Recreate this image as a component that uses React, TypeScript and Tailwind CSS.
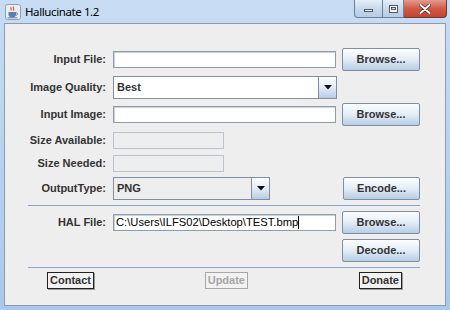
import React from 'react';

const btn =
  'flex items-center justify-center h-[23px] border border-[#7f8fa0] rounded-[2px] bg-gradient-to-b from-[#fdfeff] via-[#e3ecf6] to-[#b7cde5] text-[11px] font-bold text-[#333333]';

const plainBtn = 'h-[17px] px-[2px] flex items-center bg-[#f2f2f2] text-[11px] font-bold';

function Label({ text }: { text: string }) {
  return (
    <div className="w-[101px] text-right text-[11px] font-bold text-[#333333] leading-none">
      {text}
    </div>
  );
}

function Field({ width, disabled, children }: { width: string; disabled?: boolean; children?: React.ReactNode }) {
  return (
    <div
      className={`ml-[7px] h-[17px] ${width} flex items-center px-[2px] text-[11.2px] text-black border ${
        disabled ? 'bg-[#eeeeee] border-[#b9c4d0]' : 'bg-white border-[#8e9cab] shadow-[inset_1px_1px_0_#c8d2dc]'
      }`}
    >
      {children}
    </div>
  );
}

function Arrow() {
  return (
    <svg width="8" height="5" viewBox="0 0 8 5">
      <path d="M0 0 L8 0 L4 4.5 Z" fill="#111" />
    </svg>
  );
}

function Combo({ value, width, white }: { value: string; width: string; white?: boolean }) {
  return (
    <div className={`ml-[7px] h-[23px] ${width} flex border border-[#7f8fa0]`}>
      <div
        className={`flex-1 flex items-center pl-[3px] text-[11px] font-bold text-[#333333] border-r border-[#7f8fa0] ${
          white ? 'bg-white' : 'bg-[#eeeeee]'
        }`}
      >
        {value}
      </div>
      <div className="w-[17px] flex items-center justify-center bg-gradient-to-b from-[#fdfeff] via-[#e3ecf6] to-[#b7cde5]">
        <Arrow />
      </div>
    </div>
  );
}

function TitleBar() {
  return (
    <div className="h-[23px] flex items-start relative">
      <div className="flex items-center h-[23px] pl-[5px]">
        <svg width="16" height="16" viewBox="0 0 16 16">
          <rect x="0.5" y="0.5" width="15" height="15" rx="2" fill="#e9eef4" stroke="#8f9fb3" />
          <path d="M6 3 C5 4.5 7 5 6 6.5 M8.5 2.5 C7.5 4 9.5 5 8.5 6.8" stroke="#e0651c" strokeWidth="1.2" fill="none" />
          <path d="M3.5 8 H11 V10.5 C11 12.5 9.5 13.5 7.3 13.5 C5 13.5 3.5 12.5 3.5 10.5 Z" fill="#5b7fae" />
          <path d="M11 8.7 C13 8.7 13 11 11 11.2" stroke="#5b7fae" strokeWidth="1" fill="none" />
          <rect x="2.5" y="13.3" width="10" height="1" fill="#5b7fae" />
        </svg>
        <span className="ml-[4px] text-[11.5px] text-black font-['Noto_Sans',sans-serif] tracking-[-0.4px]">
          Hallucinate 1.2
        </span>
      </div>
      <div className="absolute right-[3px] top-0 flex h-[18px]">
        <div className="w-[29px] h-[18px] flex items-end justify-center pb-[5px] border border-t-0 border-[#6d7f96] rounded-bl-[4px] bg-gradient-to-b from-[#e6eef8] via-[#c8d9ee] to-[#b4cbe6]">
          <div className="w-[9px] h-[3px] bg-white border border-[#4c5868]" />
        </div>
        <div className="w-[21px] h-[18px] flex items-center justify-center border-b border-r border-[#6d7f96] bg-gradient-to-b from-[#e6eef8] via-[#c8d9ee] to-[#b4cbe6]">
          <div className="w-[9px] h-[8px] border border-[#4c5868] bg-white flex items-center justify-center">
            <div className="w-[5px] h-[3px] border border-[#4c5868] bg-[#c8d9ee]" />
          </div>
        </div>
        <div className="w-[43px] h-[18px] flex items-center justify-center border border-t-0 border-l-0 border-[#6b3a35] rounded-br-[4px] bg-gradient-to-b from-[#e49a8c] via-[#cf5a48] to-[#c4432f]">
          <svg width="12" height="10" viewBox="0 0 12 10">
            <path d="M1.5 1 L10.5 9 M10.5 1 L1.5 9" stroke="#4a2420" strokeWidth="3.4" strokeLinecap="round" />
            <path d="M1.5 1 L10.5 9 M10.5 1 L1.5 9" stroke="#ffffff" strokeWidth="2" strokeLinecap="round" />
          </svg>
        </div>
      </div>
    </div>
  );
}

export default function App() {
  return (
    <div className="w-[450px] h-[310px] overflow-hidden bg-gradient-to-b from-[#c8ddf4] via-[#b8d2ef] to-[#a9c8eb] font-['Liberation_Sans',Arial,sans-serif]">
      <TitleBar />
      <div className="mx-[4px] h-[283px] bg-[#eeeeee] border border-[#8c9cb0] pt-[24px]">
        {/* Input File */}
        <div className="h-[23px] flex items-center">
          <Label text="Input File:" />
          <Field width="w-[223px]" />
          <div className={`${btn} ml-[6px] w-[78px]`}>Browse...</div>
        </div>

        {/* Image Quality */}
        <div className="mt-[5px] h-[23px] flex items-center">
          <Label text="Image Quality:" />
          <Combo value="Best" width="w-[224px]" white />
        </div>

        {/* Input Image */}
        <div className="mt-[4px] h-[23px] flex items-center">
          <Label text="Input Image:" />
          <Field width="w-[223px]" />
          <div className={`${btn} ml-[6px] w-[78px]`}>Browse...</div>
        </div>

        {/* Size Available */}
        <div className="mt-[5px] h-[18px] flex items-center">
          <Label text="Size Available:" />
          <Field width="w-[111px]" disabled />
        </div>

        {/* Size Needed */}
        <div className="mt-[5px] h-[18px] flex items-center">
          <Label text="Size Needed:" />
          <Field width="w-[111px]" disabled />
        </div>

        {/* Output type */}
        <div className="mt-[5px] h-[23px] flex items-center">
          <Label text="OutputType:" />
          <Combo value="PNG" width="w-[157px]" />
          <div className={`${btn} ml-[73px] w-[77px]`}>Encode...</div>
        </div>

        <div className="mt-[5px] ml-[23px] w-[392px] h-[1px] bg-[#8aa4cc]" />

        {/* HAL file */}
        <div className="mt-[5px] h-[23px] flex items-center">
          <Label text="HAL File:" />
          <Field width="w-[223px]">
            <span className="leading-none">C:\Users\ILFS02\Desktop\TEST.bmp</span>
            <span className="w-[1px] h-[13px] bg-black" />
          </Field>
          <div className={`${btn} ml-[6px] w-[78px]`}>Browse...</div>
        </div>

        <div className="mt-[5px] h-[23px] flex items-center">
          <div className={`${btn} ml-[337px] w-[78px]`}>Decode...</div>
        </div>

        <div className="mt-[5px] ml-[23px] w-[392px] h-[1px] bg-[#8aa4cc]" />

        {/* bottom buttons */}
        <div className="mt-[4px] ml-[42px] w-[355px] flex justify-between">
          <div className={`${plainBtn} border border-[#222222] shadow-[1px_1px_0_#9a9a9a] text-[#333333]`}>Contact</div>
          <div className={`${plainBtn} border border-[#a8a8a8] text-[#a6a6a6]`}>Update</div>
          <div className={`${plainBtn} border border-[#222222] shadow-[1px_1px_0_#9a9a9a] text-[#333333]`}>Donate</div>
        </div>
      </div>
    </div>
  );
}
